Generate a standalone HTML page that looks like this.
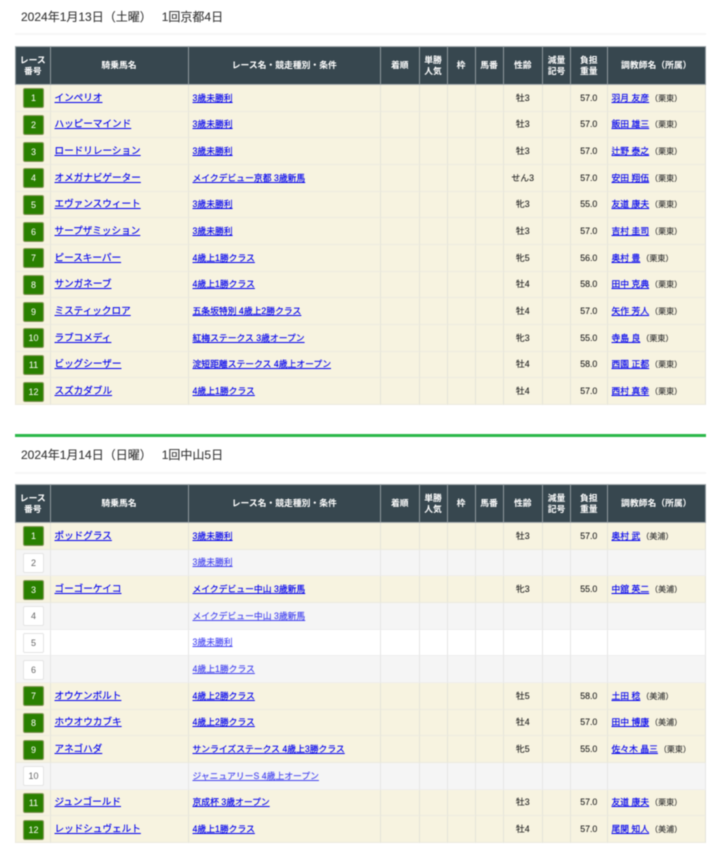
<!DOCTYPE html>
<html lang="ja"><head><meta charset="utf-8"><title>出走馬</title>
<style>
html,body{margin:0;padding:0;background:#fff}
body{width:720px;height:852px;overflow:hidden;position:relative;font-family:"Liberation Sans","Noto Sans CJK JP",sans-serif;color:#333}
#w{position:absolute;left:0;top:0;width:720px;height:852px;filter:blur(.4px)}
.d{position:absolute;left:15px;width:691px;box-sizing:border-box;height:16px;line-height:16px;padding-left:6px;font-size:12px;color:#333;white-space:pre;border:0;-webkit-text-stroke:.1px #333}
.u{position:absolute;left:15px;width:691px;height:2px;background:#f6f6f6}
.g{position:absolute;left:15px;width:691px;height:3px;top:434px;background:#2db84a}
table{position:absolute;left:15px;width:691px;table-layout:fixed;border-collapse:separate;border-spacing:0;font-size:8.8px;line-height:11px}
th{height:39px;padding:0;background:#37474f;color:#fff;font-weight:bold;text-align:center;border-right:1px solid #8e989d;border-top:1px solid #aab1b4;border-bottom:1px solid #aab1b4;box-sizing:border-box}
th:first-child{border-left:1px solid #8e989d}
td{height:26.67px;padding:1px 0 0;box-sizing:border-box;background:#f7f3e0;text-align:center;border-right:1px solid #e4e3da;border-bottom:1px solid #ecebe0;white-space:nowrap;color:#222;-webkit-text-stroke:.1px #222}
td:first-child{border-left:1px solid #ece9dc}
a{color:#0000ee;text-decoration:underline;-webkit-text-stroke:.15px #0000ee}
td.h,td.r,td.t{text-align:left;padding-left:4px}
td.h{font-size:9.6px;padding-top:1px;padding-bottom:0}
td.t{padding-left:4px}
small{font-size:8px;color:#333;margin-left:1px}
i{font-style:normal;display:block;box-sizing:border-box;width:21px;height:20px;line-height:18px;margin:0 0 0 7px;background:#2a8000;color:#fff;border:1px solid #8a9a5a;border-bottom-color:#7f8f55;border-radius:2px;font-size:9px;-webkit-text-stroke:0}
tr.x td{background:#f5f5f5;border-right-color:#e6e6e6;border-bottom-color:#eee}
tr.e td{background:#fff;border-right-color:#e6e6e6;border-bottom-color:#eee}
tr.x i,tr.e i{background:#fff;color:#666;border-color:#e4e4e4}
tr.x a,tr.e a{opacity:.72}
</style></head><body><div id="w">
<div class="d" style="top:9px">2024年1月13日（土曜）   1回京都4日</div>
<div class="u" style="top:33px"></div>
<table style="top:46px"><colgroup><col style="width:35.5px"><col style="width:138px"><col style="width:192.5px"><col style="width:38.5px"><col style="width:28px"><col style="width:28px"><col style="width:28px"><col style="width:39.5px"><col style="width:28px"><col style="width:36.5px"><col style="width:98.5px"></colgroup>
<thead><tr><th>レース<br>番号</th><th>騎乗馬名</th><th>レース名・競走種別・条件</th><th>着順</th><th>単勝<br>人気</th><th>枠</th><th>馬番</th><th>性齢</th><th>減量<br>記号</th><th>負担<br>重量</th><th>調教師名（所属）</th></tr></thead>
<tbody>
<tr><td><i>1</i></td><td class="h"><a href="#">インペリオ</a></td><td class="r"><a href="#">3歳未勝利</a></td><td></td><td></td><td></td><td></td><td>牡3</td><td></td><td>57.0</td><td class="t"><a href="#">羽月 友彦</a><small>（栗東）</small></td></tr>
<tr><td><i>2</i></td><td class="h"><a href="#">ハッピーマインド</a></td><td class="r"><a href="#">3歳未勝利</a></td><td></td><td></td><td></td><td></td><td>牡3</td><td></td><td>57.0</td><td class="t"><a href="#">飯田 雄三</a><small>（栗東）</small></td></tr>
<tr><td><i>3</i></td><td class="h"><a href="#">ロードリレーション</a></td><td class="r"><a href="#">3歳未勝利</a></td><td></td><td></td><td></td><td></td><td>牡3</td><td></td><td>57.0</td><td class="t"><a href="#">辻野 泰之</a><small>（栗東）</small></td></tr>
<tr><td><i>4</i></td><td class="h"><a href="#">オメガナビゲーター</a></td><td class="r"><a href="#">メイクデビュー京都 3歳新馬</a></td><td></td><td></td><td></td><td></td><td>せん3</td><td></td><td>57.0</td><td class="t"><a href="#">安田 翔伍</a><small>（栗東）</small></td></tr>
<tr><td><i>5</i></td><td class="h"><a href="#">エヴァンスウィート</a></td><td class="r"><a href="#">3歳未勝利</a></td><td></td><td></td><td></td><td></td><td>牝3</td><td></td><td>55.0</td><td class="t"><a href="#">友道 康夫</a><small>（栗東）</small></td></tr>
<tr><td><i>6</i></td><td class="h"><a href="#">サープザミッション</a></td><td class="r"><a href="#">3歳未勝利</a></td><td></td><td></td><td></td><td></td><td>牡3</td><td></td><td>57.0</td><td class="t"><a href="#">吉村 圭司</a><small>（栗東）</small></td></tr>
<tr><td><i>7</i></td><td class="h"><a href="#">ピースキーパー</a></td><td class="r"><a href="#">4歳上1勝クラス</a></td><td></td><td></td><td></td><td></td><td>牝5</td><td></td><td>56.0</td><td class="t"><a href="#">奥村 豊</a><small>（栗東）</small></td></tr>
<tr><td><i>8</i></td><td class="h"><a href="#">サンガネーブ</a></td><td class="r"><a href="#">4歳上1勝クラス</a></td><td></td><td></td><td></td><td></td><td>牡4</td><td></td><td>58.0</td><td class="t"><a href="#">田中 克典</a><small>（栗東）</small></td></tr>
<tr><td><i>9</i></td><td class="h"><a href="#">ミスティックロア</a></td><td class="r"><a href="#">五条坂特別 4歳上2勝クラス</a></td><td></td><td></td><td></td><td></td><td>牡4</td><td></td><td>57.0</td><td class="t"><a href="#">矢作 芳人</a><small>（栗東）</small></td></tr>
<tr><td><i>10</i></td><td class="h"><a href="#">ラブコメディ</a></td><td class="r"><a href="#">紅梅ステークス 3歳オープン</a></td><td></td><td></td><td></td><td></td><td>牝3</td><td></td><td>55.0</td><td class="t"><a href="#">寺島 良</a><small>（栗東）</small></td></tr>
<tr><td><i>11</i></td><td class="h"><a href="#">ビッグシーザー</a></td><td class="r"><a href="#">淀短距離ステークス 4歳上オープン</a></td><td></td><td></td><td></td><td></td><td>牡4</td><td></td><td>58.0</td><td class="t"><a href="#">西園 正都</a><small>（栗東）</small></td></tr>
<tr><td><i>12</i></td><td class="h"><a href="#">スズカダブル</a></td><td class="r"><a href="#">4歳上1勝クラス</a></td><td></td><td></td><td></td><td></td><td>牡4</td><td></td><td>57.0</td><td class="t"><a href="#">西村 真幸</a><small>（栗東）</small></td></tr>
</tbody></table>
<div class="g"></div>
<div class="d" style="top:447px">2024年1月14日（日曜）   1回中山5日</div>
<div class="u" style="top:472px"></div>
<table style="top:484px"><colgroup><col style="width:35.5px"><col style="width:138px"><col style="width:192.5px"><col style="width:38.5px"><col style="width:28px"><col style="width:28px"><col style="width:28px"><col style="width:39.5px"><col style="width:28px"><col style="width:36.5px"><col style="width:98.5px"></colgroup>
<thead><tr><th>レース<br>番号</th><th>騎乗馬名</th><th>レース名・競走種別・条件</th><th>着順</th><th>単勝<br>人気</th><th>枠</th><th>馬番</th><th>性齢</th><th>減量<br>記号</th><th>負担<br>重量</th><th>調教師名（所属）</th></tr></thead>
<tbody>
<tr><td><i>1</i></td><td class="h"><a href="#">ポッドグラス</a></td><td class="r"><a href="#">3歳未勝利</a></td><td></td><td></td><td></td><td></td><td>牡3</td><td></td><td>57.0</td><td class="t"><a href="#">奥村 武</a><small>（美浦）</small></td></tr>
<tr class="x"><td><i>2</i></td><td class="h"></td><td class="r"><a href="#">3歳未勝利</a></td><td></td><td></td><td></td><td></td><td></td><td></td><td></td><td class="t"></td></tr>
<tr><td><i>3</i></td><td class="h"><a href="#">ゴーゴーケイコ</a></td><td class="r"><a href="#">メイクデビュー中山 3歳新馬</a></td><td></td><td></td><td></td><td></td><td>牝3</td><td></td><td>55.0</td><td class="t"><a href="#">中舘 英二</a><small>（美浦）</small></td></tr>
<tr class="x"><td><i>4</i></td><td class="h"></td><td class="r"><a href="#">メイクデビュー中山 3歳新馬</a></td><td></td><td></td><td></td><td></td><td></td><td></td><td></td><td class="t"></td></tr>
<tr class="e"><td><i>5</i></td><td class="h"></td><td class="r"><a href="#">3歳未勝利</a></td><td></td><td></td><td></td><td></td><td></td><td></td><td></td><td class="t"></td></tr>
<tr class="x"><td><i>6</i></td><td class="h"></td><td class="r"><a href="#">4歳上1勝クラス</a></td><td></td><td></td><td></td><td></td><td></td><td></td><td></td><td class="t"></td></tr>
<tr><td><i>7</i></td><td class="h"><a href="#">オウケンボルト</a></td><td class="r"><a href="#">4歳上2勝クラス</a></td><td></td><td></td><td></td><td></td><td>牡5</td><td></td><td>58.0</td><td class="t"><a href="#">土田 稔</a><small>（美浦）</small></td></tr>
<tr><td><i>8</i></td><td class="h"><a href="#">ホウオウカブキ</a></td><td class="r"><a href="#">4歳上2勝クラス</a></td><td></td><td></td><td></td><td></td><td>牡4</td><td></td><td>57.0</td><td class="t"><a href="#">田中 博康</a><small>（美浦）</small></td></tr>
<tr><td><i>9</i></td><td class="h"><a href="#">アネゴハダ</a></td><td class="r"><a href="#">サンライズステークス 4歳上3勝クラス</a></td><td></td><td></td><td></td><td></td><td>牝5</td><td></td><td>55.0</td><td class="t"><a href="#">佐々木 晶三</a><small>（栗東）</small></td></tr>
<tr class="x"><td><i>10</i></td><td class="h"></td><td class="r"><a href="#">ジャニュアリーS 4歳上オープン</a></td><td></td><td></td><td></td><td></td><td></td><td></td><td></td><td class="t"></td></tr>
<tr><td><i>11</i></td><td class="h"><a href="#">ジュンゴールド</a></td><td class="r"><a href="#">京成杯 3歳オープン</a></td><td></td><td></td><td></td><td></td><td>牡3</td><td></td><td>57.0</td><td class="t"><a href="#">友道 康夫</a><small>（栗東）</small></td></tr>
<tr><td><i>12</i></td><td class="h"><a href="#">レッドシュヴェルト</a></td><td class="r"><a href="#">4歳上1勝クラス</a></td><td></td><td></td><td></td><td></td><td>牡4</td><td></td><td>57.0</td><td class="t"><a href="#">尾関 知人</a><small>（美浦）</small></td></tr>
</tbody></table>
</div></body></html>
